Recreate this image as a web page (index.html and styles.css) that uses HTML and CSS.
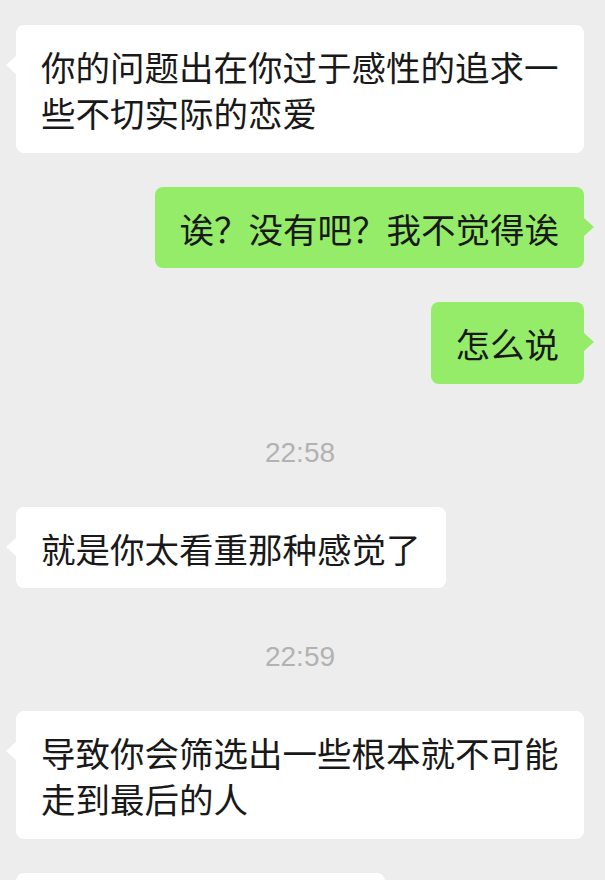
FILE: index.html
```html
<!DOCTYPE html>
<html lang="zh-CN">
 <head>
  <meta charset="utf-8">
  <link rel="stylesheet" href="styles.css">
 </head>
 <body>
  <div class="chat">

   <div class="row left">
    <div class="bubble">你的问题出在你过于感性的追求一些不切实际的恋爱</div>
   </div>

   <div class="row right">
    <div class="bubble">诶？没有吧？我不觉得诶</div>
   </div>

   <div class="row right">
    <div class="bubble">怎么说</div>
   </div>

   <div class="time">22:58</div>

   <div class="row left">
    <div class="bubble">就是你太看重那种感觉了</div>
   </div>

   <div class="time">22:59</div>

   <div class="row left">
    <div class="bubble">导致你会筛选出一些根本就不可能走到最后的人</div>
   </div>

   <div class="row left">
    <div class="bubble cut"></div>
   </div>

  </div>
 </body>
</html>
```

FILE: styles.css
```css
html, body {
        margin: 0;
        padding: 0;
        background: #ededed;
       }

.chat {
       display: flex;
       flex-direction: column;
       gap: 34px;
       padding: 25px 21px 0 16px;
       font-family: "Noto Sans CJK SC", "Noto Sans", sans-serif;
       color: #191919;
      }

.row {
      display: flex;
     }

.row.left { justify-content: flex-start; }
.row.right { justify-content: flex-end; }

.bubble {
         position: relative;
         max-width: 568px;
         box-sizing: border-box;
         padding: 18px 25px 17.5px;
         border-radius: 8px;
         font-size: 34.5px;
         line-height: 46px;
         background: #ffffff;
         word-break: break-all;
        }

.bubble::before {
                 content: "";
                 position: absolute;
                 top: 31px;
                 border-top: 9px solid transparent;
                 border-bottom: 9px solid transparent;
                }

.left .bubble::before {
                       left: -10px;
                       border-right: 10px solid #ffffff;
                      }

.right .bubble {
                background: #95ec69;
               }

.right .bubble::before {
                        right: -10px;
                        border-left: 10px solid #95ec69;
                       }

.bubble.cut {
             width: 369px;
             height: 82px;
            }

.time {
       padding-top: 15px;
       line-height: 40px;
       text-align: center;
       font-family: "Liberation Sans", Arial, sans-serif;
       font-size: 28px;
       color: #b2b2b2;
      }
```
